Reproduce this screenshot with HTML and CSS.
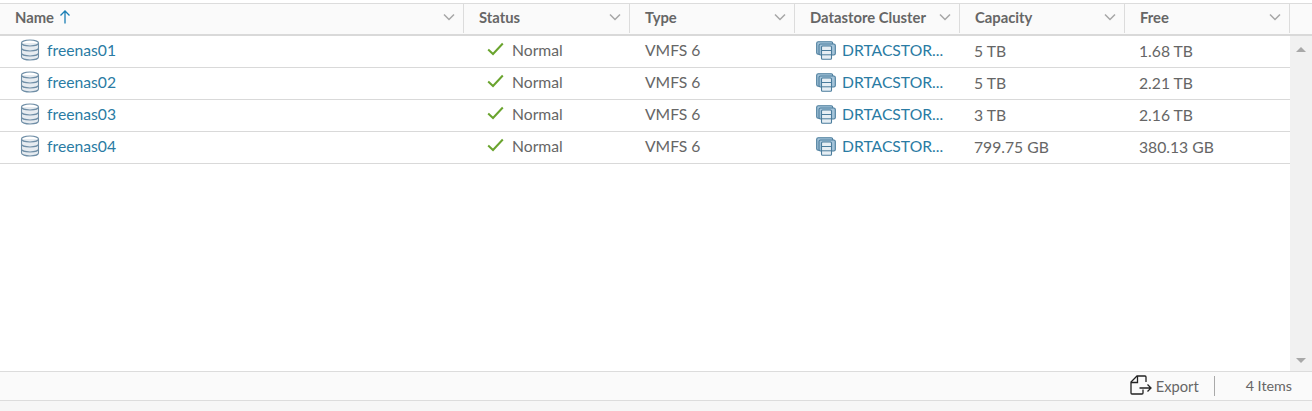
FILE: index.html
```html
<!DOCTYPE html>
<html lang="en">
<head>
<meta charset="utf-8">
<title>Datastores</title>
<link rel="stylesheet" href="styles.css">
</head>
<body>
<svg class="defs" width="0" height="0" aria-hidden="true">
  <defs>
    <symbol id="chev" viewBox="0 0 12 8"><path d="M1 1.500 6 6.500 11 1.500" fill="none" stroke="#a6a6a6" stroke-width="1.500"/></symbol>
    <symbol id="db" viewBox="0 0 20 22">
      <path d="M1.500 4v14c0 1.700 3.800 3 8.500 3s8.500-1.300 8.500-3V4z" fill="#e6ebf0"/>
      <path d="M1.500 4c0-1.700 3.800-3 8.500-3s8.500 1.300 8.500 3v14c0 1.700-3.800 3-8.500 3s-8.500-1.300-8.500-3z M1.500 4c0 1.700 3.800 3 8.500 3s8.500-1.300 8.500-3 M1.500 9c0 1.700 3.800 3 8.500 3s8.500-1.300 8.500-3 M1.500 14c0 1.700 3.800 3 8.500 3s8.500-1.300 8.500-3" fill="none" stroke="#6f8ea6" stroke-width="1.100"/>
    </symbol>
    <symbol id="check" viewBox="0 0 17 14"><path d="M1.200 7.500 6 12 15.800 1.500" fill="none" stroke="#6aa42e" stroke-width="2"/></symbol>
    <symbol id="cluster" viewBox="0 0 20 19">
      <rect x="0.700" y="0.700" width="16" height="12.500" rx="1.500" fill="#a5c4da" stroke="#4a7c9c" stroke-width="1.100"/>
      <rect x="3" y="3" width="16.300" height="11" rx="1.500" fill="#a5c4da" stroke="#4a7c9c" stroke-width="1.100"/>
      <rect x="5.500" y="5" width="10" height="13.300" rx="1" fill="#e6eef4" stroke="#4a7c9c" stroke-width="1.100"/>
      <path d="M5.500 9.500h10M5.500 13.800h10" stroke="#4a7c9c" stroke-width="1"/>
    </symbol>
  </defs>
</svg>
<div class="panel">
  <div class="head">
    <div class="th"><span class="label">Name</span><svg class="arrow" viewBox="0 0 12 14"><path d="M6 13.500V1M1.500 5.500 6 1l4.500 4.500" fill="none" stroke="#1a7fb5" stroke-width="1.300"/></svg><svg class="chev"><use href="#chev"/></svg></div>
    <div class="th"><span class="label">Status</span><svg class="chev"><use href="#chev"/></svg></div>
    <div class="th"><span class="label">Type</span><svg class="chev"><use href="#chev"/></svg></div>
    <div class="th"><span class="label">Datastore Cluster</span><svg class="chev"><use href="#chev"/></svg></div>
    <div class="th"><span class="label">Capacity</span><svg class="chev"><use href="#chev"/></svg></div>
    <div class="th"><span class="label">Free</span><svg class="chev"><use href="#chev"/></svg></div>
    <div class="th-end"></div>
  </div>
  <div class="body">
    <div class="rows">
      <div class="row">
        <div class="td name"><svg class="ic-db"><use href="#db"/></svg><a>freenas01</a></div>
        <div class="td status"><svg class="ic-check"><use href="#check"/></svg>Normal</div>
        <div class="td type">VMFS 6</div>
        <div class="td cluster"><svg class="ic-cluster"><use href="#cluster"/></svg><a>DRTACSTOR...</a></div>
        <div class="td cap">5 TB</div>
        <div class="td free">1.68 TB</div>
      </div>
      <div class="row">
        <div class="td name"><svg class="ic-db"><use href="#db"/></svg><a>freenas02</a></div>
        <div class="td status"><svg class="ic-check"><use href="#check"/></svg>Normal</div>
        <div class="td type">VMFS 6</div>
        <div class="td cluster"><svg class="ic-cluster"><use href="#cluster"/></svg><a>DRTACSTOR...</a></div>
        <div class="td cap">5 TB</div>
        <div class="td free">2.21 TB</div>
      </div>
      <div class="row">
        <div class="td name"><svg class="ic-db"><use href="#db"/></svg><a>freenas03</a></div>
        <div class="td status"><svg class="ic-check"><use href="#check"/></svg>Normal</div>
        <div class="td type">VMFS 6</div>
        <div class="td cluster"><svg class="ic-cluster"><use href="#cluster"/></svg><a>DRTACSTOR...</a></div>
        <div class="td cap">3 TB</div>
        <div class="td free">2.16 TB</div>
      </div>
      <div class="row">
        <div class="td name"><svg class="ic-db"><use href="#db"/></svg><a>freenas04</a></div>
        <div class="td status"><svg class="ic-check"><use href="#check"/></svg>Normal</div>
        <div class="td type">VMFS 6</div>
        <div class="td cluster"><svg class="ic-cluster"><use href="#cluster"/></svg><a>DRTACSTOR...</a></div>
        <div class="td cap">799.75 GB</div>
        <div class="td free">380.13 GB</div>
      </div>
    </div>
    <div class="scroll">
      <span class="up"></span>
      <span class="down"></span>
    </div>
  </div>
  <div class="foot">
    <svg class="ic-export" viewBox="0 0 22 20"><path d="M13 14.500V18a1 1 0 0 1-1 1H2a1 1 0 0 1-1-1V7l6-6h8a1 1 0 0 1 1 1v5" fill="none" stroke="#222" stroke-width="1.300"/><path d="M1 7.500h6.500V1M9.500 13h11.500M17.500 9.500 21 13l-3.500 3.500" fill="none" stroke="#222" stroke-width="1.300"/></svg>
    <span class="export">Export</span>
    <span class="sep"></span>
    <span class="count">4 Items</span>
  </div>
  <div class="tail"></div>
</div>
</body>
</html>
```
FILE: styles.css
```css
* { box-sizing: border-box; }
html, body { margin: 0; padding: 0; }
body {
  width: 1312px;
  height: 411px;
  overflow: hidden;
  background: #fff;
  font-family: "Lato", "Liberation Sans", sans-serif;
  color: #666;
}
.defs { position: absolute; }
.panel {
  display: flex;
  flex-direction: column;
  height: 411px;
  padding-top: 3px;
}
.head {
  display: grid;
  grid-template-columns: 464px 166px 165px 165px 165px 165px 1fr;
  height: 33px;
  flex: none;
  background: #fafafa;
  border-top: 1px solid #dcdcdc;
  border-bottom: 2px solid #d9d9d9;
}
.th {
  display: flex;
  align-items: center;
  padding: 0 8px 3px 15px;
  border-right: 1px solid #dcdcdc;
  margin-bottom: 1px;
  font-size: 14.800px;
  font-weight: 700;
  color: #666;
}
.label { white-space: nowrap; }
.arrow { width: 12px; height: 14px; margin-left: 5px; }
.chev { width: 12px; height: 8px; margin-left: auto; }
.body {
  flex: 1;
  display: flex;
  min-height: 0;
}
.rows { width: 1290px; flex: none; }
.row {
  display: grid;
  grid-template-columns: 464px 166px 165px 165px 165px 165px;
  height: 32px;
  border-bottom: 1px solid #d9d9d9;
  font-size: 15.700px;
}
.td {
  display: flex;
  align-items: center;
  white-space: nowrap;
  padding-bottom: 3px;
}
a { color: #2a7ba3; }
.name { padding-left: 20px; }
.ic-db { width: 20px; height: 22px; margin-right: 7px; }
.status { padding-left: 23px; }
.ic-check { width: 17px; height: 14px; margin-right: 8px; margin-top: -3px; }
.type { padding-left: 15px; }
.cluster { padding-left: 21px; }
.ic-cluster { width: 20px; height: 19px; margin-right: 6px; }
.cap { padding-left: 14px; padding-bottom: 1px; }
.free { padding-left: 14px; padding-bottom: 1px; }
.scroll {
  flex: 1;
  background: #f1f1f1;
  display: flex;
  flex-direction: column;
  justify-content: space-between;
  align-items: center;
  padding: 11px 0 8px;
}
.up { border: 5px solid transparent; border-top: 0; border-bottom: 5px solid #a8a8a8; }
.down { border: 5px solid transparent; border-bottom: 0; border-top: 5px solid #a8a8a8; }
.foot {
  flex: none;
  height: 30px;
  display: flex;
  align-items: center;
  padding-right: 20px;
  background: #fafafa;
  border-top: 1px solid #dcdcdc;
  border-bottom: 1px solid #dcdcdc;
  font-size: 14.700px;
}
.ic-export { width: 22px; height: 20px; margin-left: auto; margin-right: 4px; margin-top: -3px; }
.export { color: #666; }
.sep { width: 1px; height: 20px; background: #a9a9a9; margin: 0 31px 0 15px; }
.count { color: #666; margin-top: -2px; font-size: 14.300px; }
.tail { flex: none; height: 10px; background: #f6f6f6; }
```
